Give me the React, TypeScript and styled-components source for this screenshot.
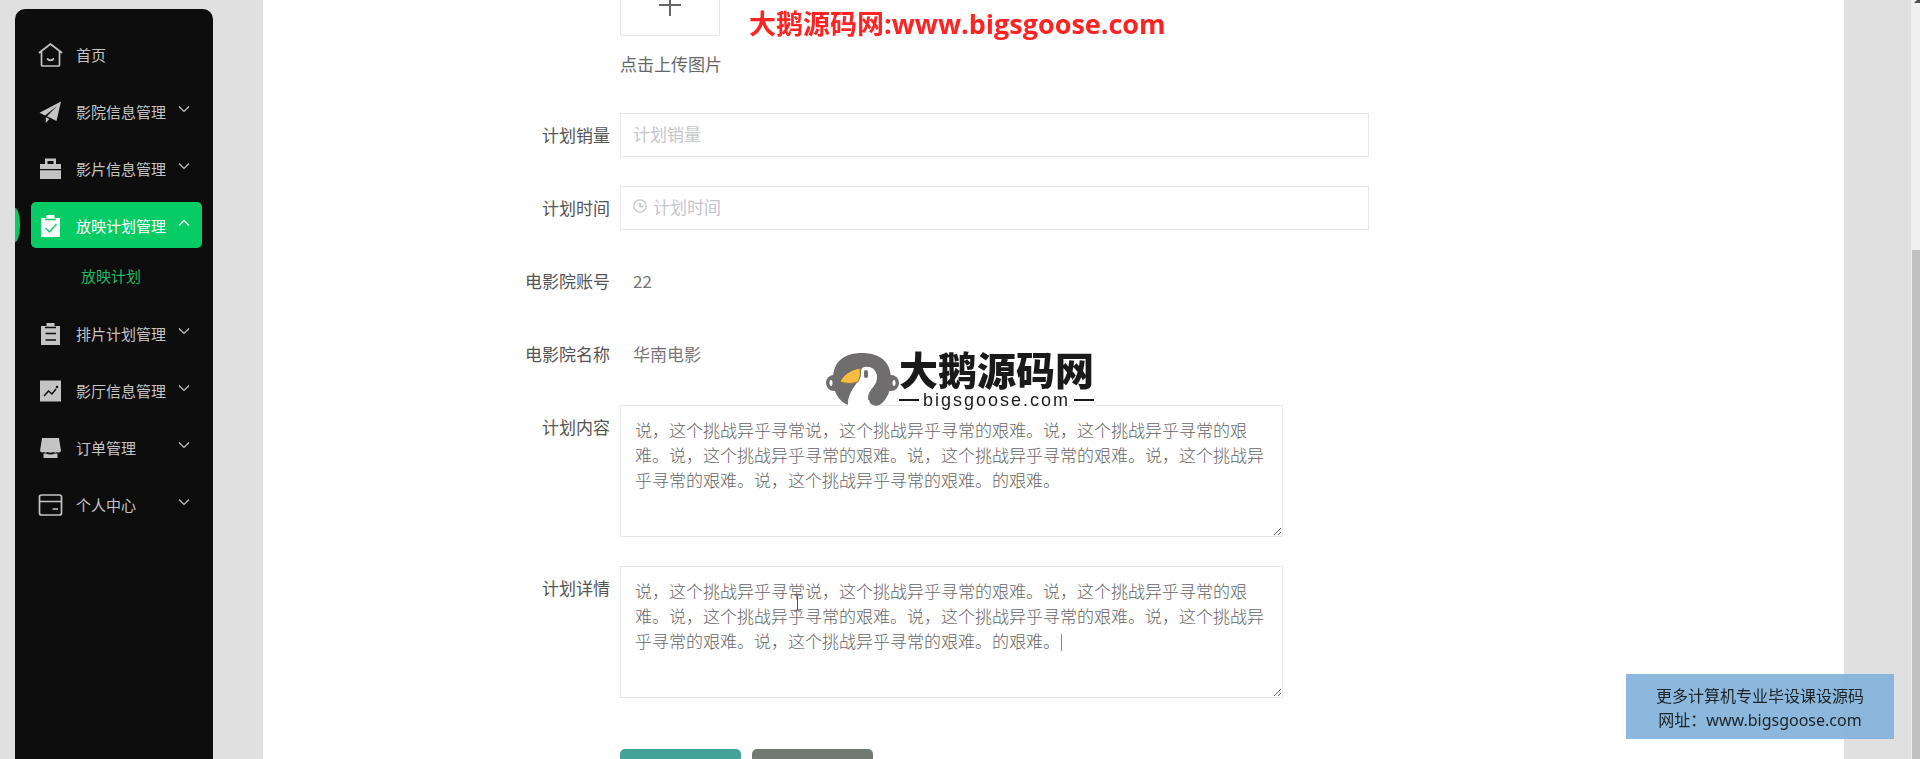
import React from "react";
import styled, { createGlobalStyle, css } from "styled-components";

const GlobalStyle = createGlobalStyle`
  * { box-sizing: border-box; }
  html, body, #root { height: 100%; margin: 0; }
  body {
    overflow: hidden;
    background: #e0e0e0;
    font-family: "Noto Sans CJK SC", sans-serif;
    font-size: 17px;
  }
  ul { list-style: none; margin: 0; padding: 0; }
`;

const Page = styled.div`
  display: flex;
  height: 100vh;
  overflow: hidden;
`;

const Sidebar = styled.nav`
  position: relative;
  flex: 0 0 198px;
  margin: 9px 0 0 15px;
  padding: 22px 11px 0 16px;
  border-radius: 10px 10px 0 0;
  background: #0d0d0d;
`;

const Menu = styled.ul`
  display: flex;
  flex-direction: column;
  gap: 11px;
`;

const MenuItem = styled.li`
  position: relative;
`;

const Marker = styled.span`
  position: absolute;
  left: -16px;
  top: 6px;
  width: 5px;
  height: 34px;
  border-radius: 0 100% 100% 0 / 0 50% 50% 0;
  background: #07cc66;
`;

const MenuButton = styled.button<{ $active?: boolean }>`
  display: flex;
  align-items: center;
  width: 100%;
  height: 46px;
  padding: 2px 12px 0 7px;
  border: 0;
  border-radius: 5px;
  background: ${(p) => (p.$active ? "#07cc66" : "transparent")};
  color: ${(p) => (p.$active ? "#fff" : "#c4c4c4")};
  font: inherit;
  font-size: 15px;
  line-height: 24px;
  text-align: left;
  cursor: pointer;
  svg { flex: none; }
`;

const MenuText = styled.span`
  flex: 1;
  margin-left: 13px;
  white-space: nowrap;
`;

const Chevron = styled.svg`
  margin-bottom: 6px;
`;

const SubLink = styled.a`
  display: block;
  margin-top: 5px;
  padding-left: 50px;
  color: #1fb864;
  font-size: 15px;
  line-height: 46px;
  text-decoration: none;
`;

const Main = styled.main`
  flex: 1;
  min-width: 0;
  margin: 0 67px 0 50px;
  background: #fff;
`;

const Form = styled.form`
  display: flex;
  flex-direction: column;
  gap: 29px;
  width: 844px;
  margin: -31px auto 0 262px;
`;

const Row = styled.div`
  display: flex;
  align-items: flex-start;
`;

const labelText = css`
  flex: 0 0 85px;
  margin-right: 10px;
  color: #555;
  line-height: 43px;
  text-align: right;
  white-space: nowrap;
`;

const Label = styled.label`${labelText}`;
const Caption = styled.span`${labelText}`;

const Upload = styled.button`
  display: flex;
  align-items: center;
  justify-content: center;
  width: 100px;
  height: 67px;
  padding: 4px 0 0;
  border: 1px solid #e6e6e6;
  background: #fff;
`;

const Tip = styled.p`
  margin: 8px 0 0;
  color: #666;
  line-height: 40px;
`;

const Field = styled.div`
  display: flex;
  align-items: center;
  flex: 1;
  gap: 6px;
  height: 44px;
  padding: 0 12px 4px;
  border: 1px solid #e8e8e8;
`;

const Input = styled.input`
  flex: 1;
  min-width: 0;
  padding: 0;
  border: 0;
  outline: 0;
  background: none;
  font: inherit;
  color: #666;
  &::placeholder { color: #c4c6cc; opacity: 1; }
`;

const Value = styled.output`
  padding-left: 13px;
  color: #777;
  line-height: 43px;
  min-height: 44px;
`;

const AreaBox = styled.div`
  position: relative;
  width: 663px;
  height: 132px;
`;

const Area = styled.textarea`
  display: block;
  width: 100%;
  height: 100%;
  padding: 11px 14px;
  border: 1px solid #e8e8e8;
  outline: 0;
  resize: vertical;
  color: #666;
  font: inherit;
  font-weight: 300;
  line-height: 25px;
`;

const Caret = styled.span`
  position: absolute;
  left: 441px;
  top: 68px;
  width: 1px;
  height: 17px;
  background: #888;
`;

const Pointer = styled.svg`
  position: absolute;
  left: 173px;
  top: 28px;
`;

const Actions = styled.div`
  display: flex;
  gap: 11px;
  padding: 22px 0 0 95px;
`;

const Action = styled.button<{ $tone: string }>`
  width: 121px;
  height: 48px;
  border: 0;
  border-radius: 5px;
  background: ${(p) => p.$tone};
  color: #fff;
  font: inherit;
`;

const ScrollTrack = styled.div`
  flex: 0 0 9px;
  padding: 0 0 0 1px;
  display: flex;
  flex-direction: column;
  background: #f0f0f0;
`;

const ScrollArrow = styled.svg`
  flex: none;
  margin-bottom: 247px;
`;

const ScrollThumb = styled.div`
  flex: 1;
  background: #c1c1c1;
`;

const SiteTitle = styled.div`
  position: fixed;
  left: 749px;
  top: 4px;
  color: #ff2424;
  font-family: "Open Sans", "Noto Sans CJK SC", sans-serif;
  font-size: 27px;
  font-weight: 700;
  line-height: 40px;
  white-space: nowrap;
`;

const Logo = styled.div`
  position: fixed;
  left: 826px;
  top: 346px;
  display: flex;
  align-items: flex-start;
  color: #1a1a1a;
  pointer-events: none;
`;

const Goose = styled.svg`
  margin-top: 7px;
`;

const LogoName = styled.div`
  font-size: 39px;
  font-weight: 900;
  line-height: 44px;
  white-space: nowrap;
`;

const LogoSite = styled.div`
  display: flex;
  align-items: center;
  justify-content: space-between;
  font-family: "Liberation Sans", sans-serif;
  font-size: 18px;
  line-height: 20px;
  letter-spacing: 2px;
  &::before, &::after {
    content: "";
    width: 20px;
    height: 2px;
    background: #1a1a1a;
  }
`;

const Notice = styled.aside`
  position: fixed;
  right: 26px;
  bottom: 20px;
  width: 268px;
  height: 65px;
  padding: 10px 0 0;
  background: rgba(129, 178, 217, 0.92);
  color: #1c2226;
  font-family: "Noto Sans", "Noto Sans CJK SC", sans-serif;
  font-size: 16px;
  line-height: 24px;
  text-align: center;
  white-space: nowrap;
`;

const ink = "#0d0d0d";

const icons: Record<string, (hole: string) => React.ReactNode> = {
  home: () => (
    <g fill="none" stroke="currentColor" strokeWidth="1.7" strokeLinejoin="round" strokeLinecap="round">
      <path d="M1.500 9.500 12.500 1l11 8.500M3.500 9v13a1 1 0 0 0 1 1h16a1 1 0 0 0 1-1V9" />
      <path d="M9.500 16q3 2.600 6 0" />
    </g>
  ),
  plane: () => (
    <path fill="currentColor" d="M23 1.5 1.5 12.8l5.600 2.600L19 6 9 16.300l9.500 4.700zM7.800 17.200V23l3.600-4z" />
  ),
  suitcase: () => (
    <path fill="currentColor" fillRule="evenodd" d="M7 7V1.500h11V7h5v5H2V7zm2.500 0h6V4h-6zM2 13.300h21V22H2z" />
  ),
  check: (hole) => (
    <>
      <path fill="currentColor" d="M3 4h19v19H3zM8.500 1h8v4h-8z" />
      <path d="M7 5.500h11M7.500 14l4 4 7-8" fill="none" stroke={hole} strokeWidth="1.300" />
    </>
  ),
  list: (hole) => (
    <>
      <path fill="currentColor" d="M3 4h19v19H3zM8.500 1h8v4h-8z" />
      <path d="M7 5.500h11M7.500 11.500h10.500M7.500 18h10.500" fill="none" stroke={hole} strokeWidth="1.400" />
    </>
  ),
  chart: (hole) => (
    <>
      <path fill="currentColor" d="M2 1.500h21v21H2z" />
      <path d="m6 17 4.500-5 3.500 3 4-5" fill="none" stroke={hole} strokeWidth="1.500" />
      <circle cx="19" cy="8" r="1.300" fill={hole} />
    </>
  ),
  shop: () => (
    <path fill="currentColor" d="M4 2h17l2 13q-1.500 2.500-4 1-2 1.500-3.500 0-3 1.500-6 0-2 1.500-3.500 0-2.800 1.300-4-1zM5.500 17.500h2.500q4.500 1.800 9 0h2.500V22h-14z" />
  ),
  card: () => (
    <g fill="none" stroke="currentColor" strokeWidth="1.700">
      <rect x="1.500" y="2" width="22" height="20" rx="2" />
      <path d="M1.500 8.500h22M14.500 16h5.500" />
    </g>
  ),
};

const menu = [
  { icon: "home", text: "首页" },
  { icon: "plane", text: "影院信息管理", fold: true },
  { icon: "suitcase", text: "影片信息管理", fold: true },
  { icon: "check", text: "放映计划管理", fold: true, child: "放映计划" },
  { icon: "list", text: "排片计划管理", fold: true },
  { icon: "chart", text: "影厅信息管理", fold: true },
  { icon: "shop", text: "订单管理", fold: true },
  { icon: "card", text: "个人中心", fold: true },
];

const story =
  "说，这个挑战异乎寻常说，这个挑战异乎寻常的艰难。说，这个挑战异乎寻常的艰难。说，这个挑战异乎寻常的艰难。说，这个挑战异乎寻常的艰难。说，这个挑战异乎寻常的艰难。说，这个挑战异乎寻常的艰难。的艰难。";

export default function App() {
  return (
    <>
      <GlobalStyle />
      <Page>
        <Sidebar>
          <Menu>
            {menu.map((m) => (
              <MenuItem key={m.text}>
                {m.child && <Marker />}
                <MenuButton type="button" $active={!!m.child}>
                  <svg width="25" height="25" viewBox="0 0 25 25" aria-hidden="true">
                    {icons[m.icon](m.child ? "#07cc66" : ink)}
                  </svg>
                  <MenuText>{m.text}</MenuText>
                  {m.fold && (
                    <Chevron width="12" height="8" viewBox="0 0 12 8" aria-hidden="true">
                      <path
                        d={m.child ? "M1 6.500 6 1.500l5 5" : "M1 1.500l5 5 5-5"}
                        fill="none"
                        stroke="currentColor"
                        strokeWidth="1.200"
                      />
                    </Chevron>
                  )}
                </MenuButton>
                {m.child && <SubLink href="#plan">{m.child}</SubLink>}
              </MenuItem>
            ))}
          </Menu>
        </Sidebar>

        <Main>
          <Form>
            <Row>
              <Caption />
              <div>
                <Upload type="button" aria-label="点击上传图片">
                  <svg width="22" height="22" viewBox="0 0 22 22" aria-hidden="true">
                    <path d="M11 0v22M0 11h22" stroke="#666" strokeWidth="2" />
                  </svg>
                </Upload>
                <Tip>点击上传图片</Tip>
              </div>
            </Row>
            <Row>
              <Label htmlFor="sales">计划销量</Label>
              <Field>
                <Input id="sales" placeholder="计划销量" />
              </Field>
            </Row>
            <Row>
              <Label htmlFor="time">计划时间</Label>
              <Field>
                <svg width="14" height="14" viewBox="0 0 14 14" fill="none" stroke="#c0c4cc" aria-hidden="true">
                  <circle cx="7" cy="7" r="6.200" strokeWidth="1.300" />
                  <path d="M7 3.500V7.500h3.500" strokeWidth="1.300" />
                </svg>
                <Input id="time" placeholder="计划时间" />
              </Field>
            </Row>
            <Row>
              <Label htmlFor="account">电影院账号</Label>
              <Value id="account">22</Value>
            </Row>
            <Row>
              <Label htmlFor="cinema">电影院名称</Label>
              <Value id="cinema">华南电影</Value>
            </Row>
            <Row>
              <Label htmlFor="content">计划内容</Label>
              <AreaBox>
                <Area id="content" defaultValue={story} spellCheck={false} />
              </AreaBox>
            </Row>
            <Row>
              <Label htmlFor="detail">计划详情</Label>
              <AreaBox>
                <Area id="detail" defaultValue={story} spellCheck={false} />
                <Caret />
                <Pointer width="9" height="18" viewBox="0 0 9 18" aria-hidden="true">
                  <path d="M1 1h3M5 1h3M4.500 1.500v15M1 17h3M5 17h3" stroke="#555" fill="none" />
                </Pointer>
              </AreaBox>
            </Row>
            <Actions>
              <Action type="button" $tone="#43a398" aria-label="提交" />
              <Action type="button" $tone="#707a72" aria-label="取消" />
            </Actions>
          </Form>
        </Main>
        <ScrollTrack>
          <ScrollArrow width="8" height="3" viewBox="0 0 8 3" aria-hidden="true">
            <path d="M2 3 5 0h3v3z" fill="#505050" />
          </ScrollArrow>
          <ScrollThumb />
        </ScrollTrack>
      </Page>

      <SiteTitle>大鹅源码网:www.bigsgoose.com</SiteTitle>

      <Logo>
        <Goose width="73" height="54" viewBox="0 0 73 54" aria-hidden="true">
          <circle cx="8" cy="30" r="8" fill="#6f6d6e" />
          <circle cx="65" cy="30" r="8" fill="#6f6d6e" />
          <ellipse cx="5" cy="30" rx="1.500" ry="3" fill="#fff" />
          <ellipse cx="68" cy="30" rx="1.500" ry="3" fill="#fff" />
          <path d="M22 52C12 48 7 38 7 26 7 8 19 0 36 0s29 8 29 26c0 12-4 20-10 25-4 3-11 2-12-4l-21 5z" fill="#6f6d6e" />
          <path d="M22 53c-1-10 5-18 11-26 3-4 1-9 3-12 6-3 14 0 15 8 1 10-9 13-9 22 0 4 2 6 4 8z" fill="#fff" />
          <path d="M34 15C24 17 17 22 14 29q10 3 18 0 4-7 2-14z" fill="#f7bb3f" stroke="#5c5548" strokeWidth="0.600" />
          <rect x="38" y="17" width="4" height="8" rx="2" fill="#6f6d6e" />
        </Goose>
        <div>
          <LogoName>大鹅源码网</LogoName>
          <LogoSite>bigsgoose.com</LogoSite>
        </div>
      </Logo>

      <Notice>
        更多计算机专业毕设课设源码
        <br />
        网址：www.bigsgoose.com
      </Notice>
    </>
  );
}
